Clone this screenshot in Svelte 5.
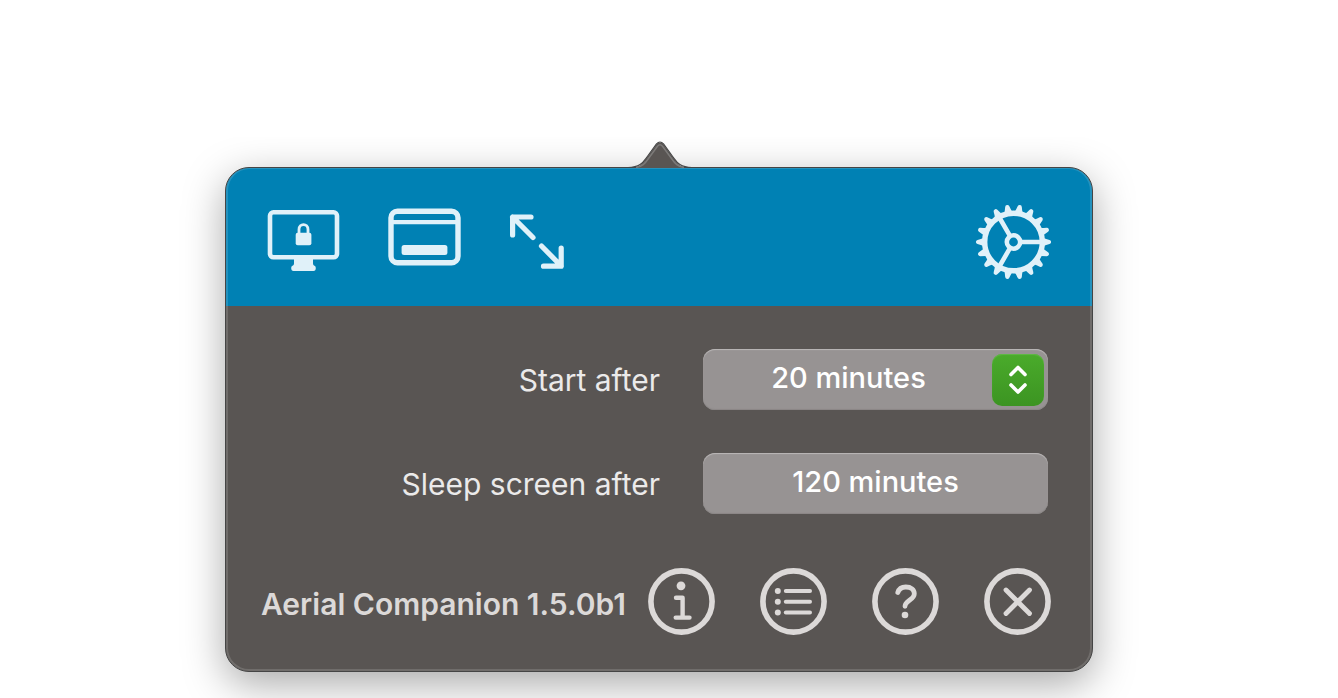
<script>
  let startAfter = $state('20 minutes');
  let sleepAfter = $state('120 minutes');
  const startOptions = ['5 minutes', '10 minutes', '20 minutes', '30 minutes', '60 minutes'];
  const teeth = Array.from({ length: 18 }, (_, i) => i * 20);
  const spokes = [0, 120, 240];
</script>

<div class="stage">
  <main class="popover">
    <svg class="arrow" viewBox="0 0 64 30" aria-hidden="true">
      <path class="arrow-fill" d="M4 29C12 28.500 15 24 19 18.500L28.500 5.500Q32 1.500 35.500 5.500L45 18.500C49 24 52 28.500 60 29Z" />
      <path class="arrow-glow" d="M8 28.600C14 28 17 24.500 20.500 19.500L29.500 7.200Q32 4.300 34.500 7.200L43.500 19.500C47 24.500 50 28 56 28.600" />
      <path class="arrow-line" d="M0 28.500C12 28.500 15 23.500 19 18L28.500 5Q32 1 35.500 5L45 18C49 23.500 52 28.500 64 28.500" />
    </svg>

    <header class="toolbar">
      <button aria-label="Lock screen">
        <svg viewBox="0 0 76 76">
          <rect class="line" x="5" y="8.300" width="67" height="45" rx="3.500" stroke-width="4.600" />
          <path d="M29 54H48V59.500Q48 61.500 49.500 61.700Q50.800 62.200 50.800 64Q50.800 67 48.500 67H28.500Q26.200 67 26.200 64Q26.200 62.200 27.500 61.700Q29 61.500 29 59.500Z" />
          <rect x="30.700" y="28.700" width="15.700" height="12.600" rx="2" />
          <path class="line" d="M34 30V25.500C34 19 43 19 43 25.500V30" stroke-width="2.800" />
        </svg>
      </button>
      <button aria-label="Desktop window">
        <svg viewBox="0 0 76 76">
          <rect class="line" x="5" y="7.300" width="67" height="51.400" rx="6.500" stroke-width="5.400" />
          <path d="M5 16H72V20.300H5Z" />
          <rect x="15.600" y="41" width="45.800" height="10" rx="2.500" />
        </svg>
      </button>
      <button aria-label="Full screen">
        <svg viewBox="0 0 76 76">
          <path class="line" d="M24 13H5.600V31M5.600 13L26 33.500M34.500 42L54.200 62M54.200 44V62.200H36.500" stroke-width="5.200" />
        </svg>
      </button>
      <button class="settings" aria-label="Settings">
        <svg viewBox="0 0 76 76">
          <g transform="translate(38.500 38)">
            <circle class="line" r="28.800" stroke-width="5.400" />
            <circle class="line" r="6.700" stroke-width="4.600" />
            {#each spokes as angle}
              <path class="line" d="M8.500 0H28" stroke-width="4.600" transform="rotate({angle})" />
            {/each}
            {#each teeth as angle}
              <path d="M30 -4Q32.500 -3 36 -2.100Q37.600 -1.600 37.600 0T36 2.100Q32.500 3 30 4Z" transform="rotate({angle})" />
            {/each}
          </g>
        </svg>
      </button>
    </header>

    <form class="form">
      <label for="start-after">Start after</label>
      <div class="picker">
        <select id="start-after" class="field" bind:value={startAfter}>
          {#each startOptions as option}
            <option>{option}</option>
          {/each}
        </select>
        <svg class="stepper" viewBox="0 0 52 52" aria-hidden="true">
          <path d="M19 20.500L26 13.500L33 20.500M19 31L26 38L33 31" />
        </svg>
      </div>
      <label for="sleep-after">Sleep screen after</label>
      <input id="sleep-after" class="field" type="text" bind:value={sleepAfter} />
    </form>

    <footer class="footer">
      <strong>Aerial Companion 1.5.0b1</strong>
      <nav class="actions">
        <button aria-label="Information">
          <svg viewBox="0 0 67 67">
            <circle class="line" cx="33.500" cy="33.500" r="30.600" stroke-width="5.600" />
            <circle cx="33" cy="17.800" r="4.400" />
            <path class="line" d="M28 29.800H34.600V49.500M27.700 49.600H41.500" stroke-width="4.400" />
          </svg>
        </button>
        <button aria-label="List">
          <svg viewBox="0 0 67 67">
            <circle class="line" cx="33.500" cy="33.500" r="30.600" stroke-width="5.600" />
            {#each [23, 33.7, 44.5] as y}
              <circle cx="17.800" cy={y} r="3" />
              <path class="line" d="M25.800 {y}H50" stroke-width="4" />
            {/each}
          </svg>
        </button>
        <button aria-label="Help">
          <svg viewBox="0 0 67 67">
            <circle class="line" cx="33.500" cy="33.500" r="30.600" stroke-width="5.600" />
            <path class="line" d="M25.800 24.500C27 20.500 29.700 19 33.800 19C39 19 42.300 21.600 42.300 25.700C42.300 32 33 32.500 33 38.300" stroke-width="4.800" />
            <circle cx="33" cy="47" r="3.300" />
          </svg>
        </button>
        <button aria-label="Quit">
          <svg viewBox="0 0 67 67">
            <circle class="line" cx="33.500" cy="33.500" r="30.600" stroke-width="5.600" />
            <path class="line" d="M22 22L45.500 45.500M45.500 22L22 45.500" stroke-width="4.800" />
          </svg>
        </button>
      </nav>
    </footer>
  </main>
</div>

<style>
  :global(body) {
    margin: 0;
    background: #fff;
  }

  .stage {
    margin-top: 137px;
    padding: 30px 245px 26px 225px;
    overflow: hidden;
    font-family: Inter, 'Liberation Sans', sans-serif;
  }

  .popover {
    position: relative;
    box-sizing: border-box;
    min-width: 800px;
    border: 1px solid #454545;
    border-radius: 24px;
    background: #595553;
    box-shadow: 0 12px 42px rgba(0, 0, 0, 0.34);
  }

  .popover::after {
    content: '';
    position: absolute;
    inset: 0;
    border: 2px solid rgba(255, 255, 255, 0.14);
    border-top-width: 1px;
    border-radius: 23px;
    pointer-events: none;
  }

  .arrow {
    position: absolute;
    z-index: 1;
    left: 50%;
    top: -29px;
    width: 64px;
    height: 30px;
    margin-left: -31px;
  }

  .arrow-fill {
    fill: #595553;
  }

  .arrow-glow {
    fill: none;
    stroke: #7c7a79;
    stroke-width: 1.500;
  }

  .arrow-line {
    fill: none;
    stroke: #454545;
    stroke-width: 1.200;
  }

  button {
    display: block;
    margin: 0;
    padding: 0;
    border: 0;
    background: none;
    color: inherit;
    cursor: pointer;
  }

  button svg {
    display: block;
    fill: currentColor;
  }

  .line {
    fill: none;
    stroke: currentColor;
    stroke-linecap: round;
    stroke-linejoin: round;
  }

  .toolbar {
    display: flex;
    gap: 45px;
    padding: 36px 41px 26px 39px;
    border-radius: 23px 23px 0 0;
    background: #0081b4;
    color: #e0f1f9;
  }

  .toolbar svg {
    width: 76px;
    height: 76px;
  }

  .settings {
    margin-left: auto;
  }

  .form {
    display: grid;
    grid-template-columns: 1fr 345px;
    align-items: center;
    gap: 43px;
    padding: 43px 44px 54px 36px;
  }

  label {
    color: #ebeaea;
    font-size: 30px;
    line-height: 36px;
    text-align: right;
  }

  .picker {
    position: relative;
  }

  .field {
    display: block;
    box-sizing: border-box;
    width: 100%;
    height: 61px;
    margin: 0;
    padding: 0 0 4px;
    border: 0;
    border-radius: 12px;
    appearance: none;
    background: #979393;
    box-shadow: inset 0 1px 1px #bbb8b8, inset 0 -1px 1px #8b8787;
    color: #fff;
    font: 500 29px/36px Inter, 'Liberation Sans', sans-serif;
    text-align: center;
    text-align-last: center;
  }

  select.field {
    padding-right: 54px;
  }

  .stepper {
    position: absolute;
    top: 5px;
    right: 4px;
    width: 52px;
    height: 52px;
    border-radius: 10px;
    background: linear-gradient(#4aab2b, #3c9422);
    box-shadow: inset 0 1px 1px #61b947;
    fill: none;
    stroke: #fff;
    stroke-width: 3.600;
    stroke-linecap: round;
    stroke-linejoin: round;
    pointer-events: none;
  }

  .footer {
    display: flex;
    align-items: center;
    justify-content: space-between;
    padding: 0 41px 36px 35px;
    color: #dcd9d8;
  }

  strong {
    padding-top: 4px;
    font-size: 30px;
    font-weight: 600;
    line-height: 36px;
    white-space: nowrap;
  }

  .actions {
    display: flex;
    gap: 45px;
  }

  .actions svg {
    width: 67px;
    height: 67px;
  }
</style>
